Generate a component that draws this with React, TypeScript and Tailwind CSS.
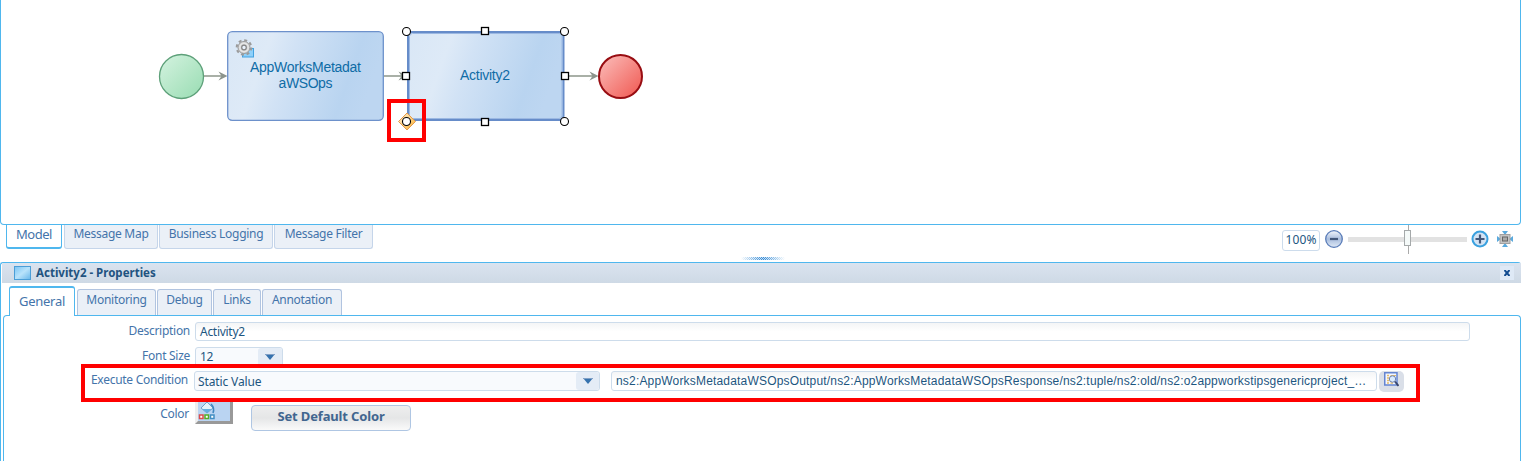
import type { ReactNode } from "react";

const handles = [
  [485, 31], [406, 76], [565, 76], [485, 122],
];
const corners = [
  [406.5, 31.5], [564.5, 31.5], [406.5, 121.5], [564.5, 121.5],
];

function Diagram() {
  return (
    <svg width="700" height="160" viewBox="0 0 700 160" className="absolute top-0 left-0" fontFamily="'Liberation Sans', Arial, sans-serif" fontSize="14" fill="none">
      <defs>
        <linearGradient id="task" x1="0" y1="0" x2="1" y2="0.2">
          <stop offset="0" stopColor="#d9e7f6" />
          <stop offset="0.28" stopColor="#deeaf7" />
          <stop offset="0.45" stopColor="#d1e2f5" />
          <stop offset="0.85" stopColor="#b9d4f0" />
          <stop offset="1" stopColor="#bdd6f1" />
        </linearGradient>
        <linearGradient id="start" x1="0" y1="0" x2="1" y2="1">
          <stop offset="0" stopColor="#d5f3e0" />
          <stop offset="1" stopColor="#98dcb2" />
        </linearGradient>
        <linearGradient id="end" x1="0" y1="0" x2="1" y2="1">
          <stop offset="0" stopColor="#fbc0bd" />
          <stop offset="1" stopColor="#f0564f" />
        </linearGradient>
        <linearGradient id="amber" x1="0" y1="0" x2="1" y2="1">
          <stop offset="0" stopColor="#fff3d8" />
          <stop offset="1" stopColor="#f8ae30" />
        </linearGradient>
      </defs>
      <g stroke="#a9b0a7" strokeWidth="1.8">
        <path d="M204 76H222M384 76H404M565 76H594" />
      </g>
      <g fill="#8c948c">
        <path d="M218.500 71.500 227.500 76 218.500 80.500 221.500 76Z" />
        <path d="M398.500 71.500 407.500 76 398.500 80.500 401.500 76Z" />
        <path d="M589.500 71.500 598.500 76 589.500 80.500 592.500 76Z" />
      </g>
      <circle cx="181.500" cy="76.500" r="22" fill="url(#start)" stroke="#5da079" strokeWidth="1.3" />
      <circle cx="620.500" cy="76.500" r="21.500" fill="url(#end)" stroke="#980d12" strokeWidth="2" />
      <rect x="227.700" y="31.700" width="155.600" height="88.600" rx="4.500" fill="url(#task)" stroke="#6d91cb" strokeWidth="1.300" />
      <rect x="408" y="32" width="155.500" height="88" rx="4" fill="url(#task)" stroke="#668cc9" strokeWidth="2" />
      <rect x="409.500" y="33.500" width="152.500" height="85" rx="3" stroke="#9bb8e2" strokeWidth="1" />
      <g>
        <rect x="242.500" y="48.500" width="11" height="8.500" fill="#8ed0fa" stroke="#43a2e0" />
        <circle cx="244" cy="47.500" r="7.300" stroke="#9a9a9a" strokeWidth="2" strokeDasharray="3 2.730" />
        <circle cx="244" cy="47.500" r="6" fill="#d2d2d2" stroke="#9a9a9a" strokeWidth="1" />
        <circle cx="244" cy="47.500" r="4.200" stroke="#e6e6e6" strokeWidth="1.400" />
        <circle cx="244" cy="47.500" r="2.300" fill="#e9f1fb" stroke="#858585" strokeWidth="1.200" />
      </g>
      <g fill="#0f6ca6" textAnchor="middle">
        <text x="305.500" y="72" textLength="111">AppWorksMetadat</text>
        <text x="305.500" y="88" textLength="54">aWSOps</text>
        <text x="485" y="80" textLength="50">Activity2</text>
      </g>
      <path d="M407 113 415.500 121.500 407 130 398.500 121.500Z" fill="url(#amber)" stroke="#e39a4d" />
      <g fill="white" stroke="black" strokeWidth="1.300">
        {handles.map(([x, y]) => <rect key={`${x}-${y}`} x={x - 3.5} y={y - 3.5} width="7" height="7" />)}
        {corners.map(([x, y]) => <circle key={`${x}-${y}`} cx={x} cy={y} r="4" strokeWidth="1.100" />)}
      </g>
      <rect x="389" y="101" width="35" height="39" stroke="#ff0000" strokeWidth="4" />
    </svg>
  );
}

function ModelTab({ className, children }: { className: string; children: ReactNode }) {
  return <div className={`h-6 shrink-0 rounded-b-[3px] border border-t-0 border-[#c5d5ea] bg-[#ebf0f7] text-center leading-[18px] whitespace-nowrap ${className}`}>{children}</div>;
}

function PropTab({ className, children }: { className: string; children: ReactNode }) {
  return <div className={`h-[26px] shrink-0 rounded-t-[3px] border border-b-0 border-[#b1c4e0] bg-[#ebf0f7] text-center leading-[20px] whitespace-nowrap ${className}`}>{children}</div>;
}

function Arrow({ className }: { className: string }) {
  return (
    <span className={`flex h-full items-center justify-center rounded-[3px] bg-[#e4ecf6] ${className}`}>
      <svg width="10" height="6" viewBox="0 0 10 6"><path d="M0 0H10L5 6Z" fill="#3572ae" /><path d="M0 .5H10" stroke="#82a1c7" /></svg>
    </span>
  );
}

function ZoomButton({ plus = false }: { plus?: boolean }) {
  return (
    <svg width="18" height="18" viewBox="0 0 18 18" className="shrink-0">
      <defs>
        <linearGradient id="minusFill" x1="0" y1="0" x2="0" y2="1">
          <stop offset="0" stopColor="#f4f7fb" /><stop offset="0.5" stopColor="#a9bddd" /><stop offset="1" stopColor="#dfe9f6" />
        </linearGradient>
      </defs>
      <circle cx="9" cy="9" r={plus ? 7.5 : 8.3} fill={plus ? "#d3e3f4" : "url(#minusFill)"} stroke={plus ? "#3aa1df" : "#597cb8"} strokeWidth={plus ? 2 : 1.3} />
      <path d={plus ? "M4.500 9H13.500M9 4.500V13.500" : "M5 9H13"} stroke="#435779" strokeWidth="2.200" />
    </svg>
  );
}

function ZoomBar() {
  return (
    <div className="mr-[7px] ml-auto flex h-[28px] items-center">
      <div className="mt-[3px] h-[21px] w-[38px] rounded-[3px] border border-[#cddcec] text-center text-[12px] leading-[18px] tracking-[0.1px] text-[#1d567f]">100%</div>
      <div className="ml-[5px] flex"><ZoomButton /></div>
      <svg width="119" height="30" viewBox="0 0 119 30" className="ml-[5px]">
        <path d="M0 15.500H119" stroke="#e2e2e2" strokeWidth="5" />
        <path d="M60.500 1V30" stroke="#aaa" />
        <rect x="56.500" y="6.500" width="6" height="15" fill="#f5faf9" stroke="#a5a9aa" />
      </svg>
      <div className="ml-[4px] flex"><ZoomButton plus /></div>
      <svg width="18" height="16" viewBox="0 0 18 16" className="ml-[7px]">
        <path d="M6 0H12L9 4ZM6 16H12L9 12ZM1 5V11L5 8ZM17 5V11L13 8Z" fill="#5aaade" />
        <rect x="4" y="3.500" width="10" height="9" fill="#c4c4c4" stroke="#a0a0a0" />
        <rect x="6.500" y="6" width="5" height="4" fill="#aaa" stroke="#666" />
      </svg>
    </div>
  );
}

function FormRow({ label, className, labelClass, children }: { label: string; className: string; labelClass: string; children: ReactNode }) {
  return (
    <div className={`flex items-start ${className}`}>
      <label className={`shrink-0 text-right leading-[18px] whitespace-nowrap text-[#4474aa] ${labelClass}`}>{label}</label>
      {children}
    </div>
  );
}

export default function App() {
  return (
    <div className="flex h-[461px] w-[1521px] flex-col overflow-hidden bg-white font-['Noto_Sans','Open_Sans',sans-serif] text-[12px] tracking-[-0.28px] text-[#4474aa]">
      <main className="relative h-[225px] shrink-0 rounded-b-[4px] border border-t-0 border-[#4fb7ee]">
        <div className="absolute top-0 -left-px tracking-normal"><Diagram /></div>
      </main>
      <nav className="flex h-[37px] shrink-0 items-start pl-[6px]">
        <ModelTab className="w-14 border-[#4fb7ee]! border-b-2 bg-white! text-[13px] tracking-[-0.5px]">Model</ModelTab>
        <ModelTab className="ml-[2px] w-[94px]">Message Map</ModelTab>
        <ModelTab className="ml-px w-[114px]">Business Logging</ModelTab>
        <ModelTab className="ml-px w-[99px]">Message Filter</ModelTab>
        <div className="flex h-full w-[39px] grow items-end justify-center">
          <svg width="44" height="3" viewBox="0 0 44 3" className="mr-[130px] mb-[2px]">
            <defs><linearGradient id="grip" gradientUnits="userSpaceOnUse" x1="0" y1="0" x2="44" y2="0"><stop stopColor="#4c9bdd" stopOpacity="0" /><stop offset=".5" stopColor="#358bd6" /><stop offset="1" stopColor="#4c9bdd" stopOpacity="0" /></linearGradient></defs>
            <path d="M0 .5H44M1 1.500H44M0 2.500H44" stroke="url(#grip)" strokeDasharray="1 1" />
            <rect width="44" height="3" fill="url(#grip)" opacity=".3" />
          </svg>
        </div>
        <ZoomBar />
      </nav>
      <section className="flex grow flex-col rounded-t-[3px] border-t border-l border-[#4fb7ee] pl-px">
        <header className="flex h-[20px] shrink-0 items-center bg-linear-to-b from-[#dae3ef] to-[#ced9e5] pr-[7px] pl-[12px] font-bold text-[#225380]">
          <svg width="17" height="14" viewBox="0 0 17 14">
            <defs><linearGradient id="panel" x1="0" y1="0" x2="1" y2="1"><stop stopColor="#79c4f4" /><stop offset=".5" stopColor="#b9e3fb" /><stop offset="1" stopColor="#66b6ea" /></linearGradient></defs>
            <rect x=".5" y=".5" width="16" height="13" fill="url(#panel)" stroke="#4b9ed7" />
          </svg>
          <h2 className="ml-[5px] text-[11.500px] leading-[18px] tracking-[0px]">Activity2 - Properties</h2>
          <div className="ml-auto flex h-[14px] w-[14px] items-center justify-center bg-[#dee9f6]">
            <svg width="6" height="6" viewBox="0 0 6 6"><path d="M.5 0 5.500 6M5.500 0 .5 6" stroke="#114b90" strokeWidth="2" /></svg>
          </div>
        </header>
        <nav className="relative z-10 -mb-px flex h-[33px] shrink-0 items-end pl-[7px]">
          <div className="h-[30px] w-[66px] rounded-t-[3px] border border-t-2 border-b-0 border-[#4fb7ee] bg-white text-center text-[13px] leading-[26px]">General</div>
          <PropTab className="mb-px ml-[2px] w-[79px]">Monitoring</PropTab>
          <PropTab className="mb-px ml-px w-[55px]">Debug</PropTab>
          <PropTab className="mb-px ml-px w-[48px]">Links</PropTab>
          <PropTab className="mb-px ml-px w-[80px]">Annotation</PropTab>
        </nav>
        <form className="relative ml-px flex grow flex-col rounded-t-[4px] border border-b-0 border-[#4fb7ee]">
          <FormRow label="Description" className="mt-[6px] h-[25px]" labelClass="w-[186px]">
            <div className="ml-[5px] h-[19px] w-[1275px] rounded-[3px] border border-[#cddceb] bg-linear-to-b from-[#f4f5f6] via-white to-white pl-1 leading-[18px] text-[#1d567f]">Activity2</div>
          </FormRow>
          <FormRow label="Font Size" className="h-[24px]" labelClass="w-[186px]">
            <div className="ml-[5px] flex h-[20px] w-[88px] justify-between rounded-[3px] border border-[#cddceb] bg-[#f8fafd] pl-1 leading-[18px] text-[#1d567f]">12<Arrow className="w-[24px] pr-px" /></div>
          </FormRow>
          <FormRow label="Execute Condition" className="h-[34px]" labelClass="w-[184px]">
            <div className="ml-[6px] flex h-[20px] w-[406px] justify-between rounded-[3px] border border-[#cddceb] bg-[#f8fafd] pl-[3px] leading-[20px] tracking-[-0.12px] text-[#1d567f]">Static Value<Arrow className="w-[23px]" /></div>
            <div className="ml-[11px] h-[20px] w-[766px] rounded-[3px] border border-[#cddceb] bg-linear-to-b from-[#f4f5f6] via-white to-white pl-[4px] font-['Liberation_Sans',Arial,sans-serif] leading-[18px] tracking-[0.18px] whitespace-nowrap text-[#1d567f]">ns2:AppWorksMetadataWSOpsOutput/ns2:AppWorksMetadataWSOpsResponse/ns2:tuple/ns2:old/ns2:o2appworkstipsgenericproject_…</div>
            <div className="ml-[2px] flex h-[21px] w-[25px] justify-center rounded-[5px] bg-[#dadfe8] pt-px">
              <svg width="15" height="15" viewBox="0 0 15 15"><path d="M.75.75H13V13H.75Z" fill="#f4f7ff" stroke="#6485d1" strokeWidth="1.500" /><path d="M3 3.500H5M3 6H5M3 8.500H5M3 11H5M6.500 11H9" stroke="#e4bc69" strokeWidth="1.500" /><path d="M6.500 3.500H12" stroke="#e4bc69" /><circle cx="8.500" cy="7" r="3.200" fill="#d9ebff" stroke="#6e83b1" /><path d="m11 9.500 3.500 4.500" stroke="#39466c" strokeWidth="2" /></svg>
            </div>
          </FormRow>
          <FormRow label="Color" className="h-[30px]" labelClass="w-[185px]">
            <svg width="38" height="23" viewBox="0 0 38 23" className="-mt-[4px] ml-[6px]">
              <rect width="38" height="23" fill="#999" /><path d="M0 0H35V20H3L0 23Z" fill="#eee" /><rect x="3" width="32" height="20" fill="#bad4f2" />
              <path d="m6 7 6-6 6 6-6 5Z" fill="#e4f2fc" stroke="#739fc9" /><path d="m7 8 10 0-5 4Z" fill="#65afe0" /><path d="M16 3Q20 7 18 12" fill="none" stroke="#3e86bf" strokeWidth="1.500" />
              <g fill="#fff" strokeWidth="1.500"><rect x="4.500" y="14" width="3.500" height="3.500" stroke="#dc4c4c" /><rect x="10" y="14" width="3.500" height="3.500" stroke="#54ad27" /><rect x="15.500" y="14" width="3.500" height="3.500" stroke="#438ec3" /></g>
            </svg>
            <button type="button" className="ml-[18px] h-[26px] w-[160px] rounded-[4px] border border-[#afc6e3] bg-linear-to-b from-[#eeeeee] via-[#e5e6e7] to-[#fafafa] pb-[4px] text-[13px] leading-[18px] font-bold tracking-[-0.15px] text-[#41658f]">Set Default Color</button>
          </FormRow>
          <div className="pointer-events-none absolute top-[48px] left-[77px] h-[38px] w-[1339px] border-4 border-[#ff0000]" />
        </form>
      </section>
    </div>
  );
}
